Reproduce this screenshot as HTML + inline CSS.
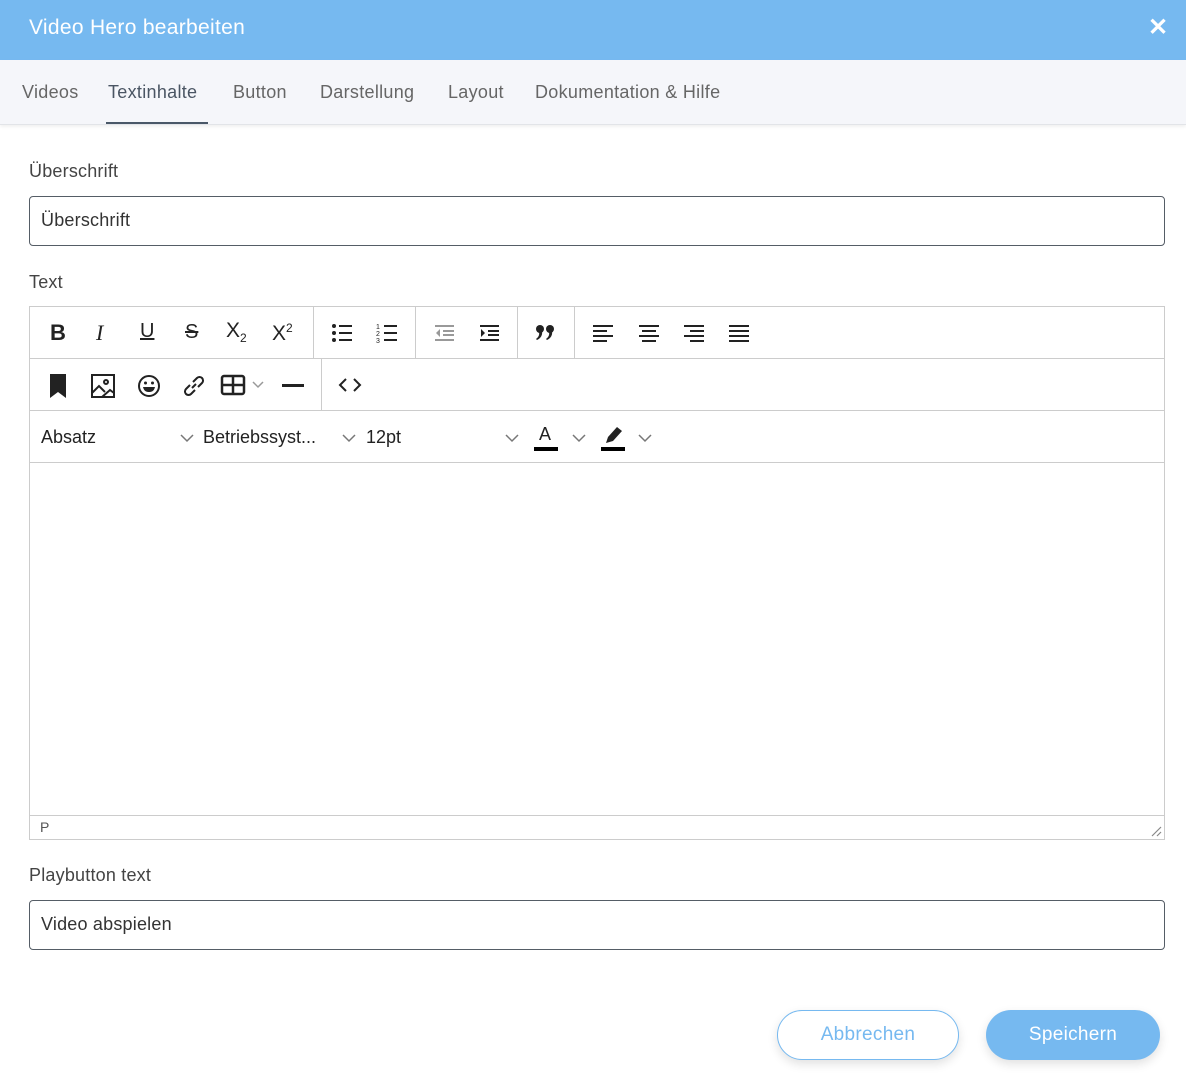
<!DOCTYPE html>
<html><head><meta charset="utf-8"><style>
*{box-sizing:border-box;margin:0;padding:0}
body{width:1186px;height:1086px;background:#fff;font-family:"Liberation Sans",sans-serif;color:#333;position:relative;overflow:hidden}
.a{position:absolute}
.hdr{left:0;top:0;width:1186px;height:60px;background:#76b9f0;color:#fff;font-size:21px;letter-spacing:.3px}
.tabs{left:0;top:60px;width:1186px;height:65px;background:#f5f6fa;border-bottom:1px solid #e2e4e8;box-shadow:0 2px 3px rgba(0,0,0,.06)}
.tab{top:22px;font-size:18px;color:#666;letter-spacing:.3px}
.lbl{font-size:18px;color:#444;letter-spacing:.2px}
.inp{border:1px solid #555d66;border-radius:4px;height:50px;left:29px;width:1136px;font-size:18px;color:#333;padding:13px 11px;letter-spacing:.2px}
.ed{left:29px;top:306px;width:1136px;height:534px;border:1px solid #ccc}
.row{position:absolute;left:0;width:1134px;height:52px;border-bottom:1px solid #ccc}
.sep{position:absolute;top:0;width:1px;height:51px;background:#ccc}
svg{position:absolute}
.btn{top:1010px;height:50px;border-radius:25px;font-size:19px;text-align:center;line-height:50px;box-shadow:0 4px 10px rgba(0,0,0,.12);letter-spacing:.3px}
</style></head><body>
<div class="a hdr"><div class="a" style="left:29px;top:16px">Video Hero bearbeiten</div>
<div class="a" style="left:1148px;top:13px;font-size:24px;font-weight:bold">✕</div></div>
<div class="a tabs">
<div class="a tab" style="left:22px">Videos</div>
<div class="a tab" style="left:108px;color:#4a5563">Textinhalte</div>
<div class="a" style="left:106px;top:62px;width:102px;height:2px;background:#4a5868"></div>
<div class="a tab" style="left:233px">Button</div>
<div class="a tab" style="left:320px">Darstellung</div>
<div class="a tab" style="left:448px">Layout</div>
<div class="a tab" style="left:535px">Dokumentation &amp; Hilfe</div>
</div>
<div class="a lbl" style="left:29px;top:161px">Überschrift</div>
<div class="a inp" style="top:196px">Überschrift</div>
<div class="a lbl" style="left:29px;top:272px">Text</div>
<div class="a ed">
<div class="row" style="top:0">
<div class="a" style="left:20px;top:13px;font-size:22px;font-weight:bold;color:#222">B</div>
<div class="a" style="left:66px;top:13px;font-size:22px;font-style:italic;font-family:'Liberation Serif';color:#222">I</div>
<div class="a" style="left:110px;top:13px;font-size:20px;text-decoration:underline;color:#222">U</div>
<div class="a" style="left:155px;top:14px;font-size:20px;text-decoration:line-through;color:#222">S</div>
<div class="a" style="left:196px;top:12px;font-size:21px;color:#222">X<sub style="font-size:12px">2</sub></div>
<div class="a" style="left:242px;top:14px;font-size:21px;color:#222">X<sup style="font-size:12px">2</sup></div>
<div class="sep" style="left:283px"></div>
<svg style="left:300px;top:14px" width="24" height="24"><g fill="#222"><circle cx="4" cy="5" r="2"/><circle cx="4" cy="12" r="2"/><circle cx="4" cy="19" r="2"/><rect x="9" y="4" width="13" height="2"/><rect x="9" y="11" width="13" height="2"/><rect x="9" y="18" width="13" height="2"/></g></svg>
<svg style="left:345px;top:14px" width="24" height="24"><g fill="#222"><rect x="9" y="4" width="13" height="2"/><rect x="9" y="11" width="13" height="2"/><rect x="9" y="18" width="13" height="2"/><text x="1" y="8" font-size="7">1</text><text x="1" y="15" font-size="7">2</text><text x="1" y="22" font-size="7">3</text></g></svg>
<div class="sep" style="left:385px"></div>
<svg style="left:402px;top:14px" width="24" height="24"><g fill="#999"><rect x="3" y="4" width="19" height="2"/><rect x="11" y="9" width="11" height="2"/><rect x="11" y="13" width="11" height="2"/><rect x="3" y="18" width="19" height="2"/><path d="M8 8l-4 4 4 4z"/></g></svg>
<svg style="left:447px;top:14px" width="24" height="24"><g fill="#222"><rect x="3" y="4" width="19" height="2"/><rect x="11" y="9" width="11" height="2"/><rect x="11" y="13" width="11" height="2"/><rect x="3" y="18" width="19" height="2"/><path d="M4 8l4 4-4 4z"/></g></svg>
<div class="sep" style="left:487px"></div>
<svg style="left:505px;top:17px" width="22" height="18"><g fill="#222"><circle cx="5" cy="5" r="4"/><path d="M7 7q1 6-5 9l-1-1q4-3 3-7z"/><circle cx="15" cy="5" r="4"/><path d="M17 7q1 6-5 9l-1-1q4-3 3-7z"/></g></svg>
<div class="sep" style="left:544px"></div>
<svg style="left:561px;top:14px" width="24" height="24"><g fill="#222"><rect x="2" y="4" width="20" height="2"/><rect x="2" y="9" width="14" height="2"/><rect x="2" y="14" width="20" height="2"/><rect x="2" y="19" width="14" height="2"/></g></svg>
<svg style="left:607px;top:14px" width="24" height="24"><g fill="#222"><rect x="2" y="4" width="20" height="2"/><rect x="5" y="9" width="14" height="2"/><rect x="2" y="14" width="20" height="2"/><rect x="5" y="19" width="14" height="2"/></g></svg>
<svg style="left:652px;top:14px" width="24" height="24"><g fill="#222"><rect x="2" y="4" width="20" height="2"/><rect x="8" y="9" width="14" height="2"/><rect x="2" y="14" width="20" height="2"/><rect x="8" y="19" width="14" height="2"/></g></svg>
<svg style="left:697px;top:14px" width="24" height="24"><g fill="#222"><rect x="2" y="4" width="20" height="2"/><rect x="2" y="9" width="20" height="2"/><rect x="2" y="14" width="20" height="2"/><rect x="2" y="19" width="20" height="2"/></g></svg>
</div>
<div class="row" style="top:52px">
<svg style="left:16px;top:14px" width="24" height="26"><path d="M4 1h16v24l-8-6-8 6z" fill="#222"/></svg>
<svg style="left:60px;top:14px" width="26" height="26"><g fill="none" stroke="#222" stroke-width="2"><rect x="2" y="2" width="22" height="22"/><circle cx="16" cy="9" r="2"/><path d="M2 20l7-7 6 6M12 24l8-7 4 3"/></g></svg>
<svg style="left:106px;top:14px" width="26" height="26"><g fill="none" stroke="#222" stroke-width="2"><circle cx="13" cy="13" r="10"/></g><g fill="#222"><circle cx="9.5" cy="10" r="1.5"/><circle cx="16.5" cy="10" r="1.5"/><path d="M7 14h12c-1 4-3 5-6 5s-5-1-6-5z"/></g></svg>
<svg style="left:151px;top:14px" width="26" height="26"><g fill="none" stroke="#222" stroke-width="2"><path d="M11 15l4-4M9 12l-4 4a3 3 0 0 0 5 5l4-4M17 14l4-4a3 3 0 0 0-5-5l-4 4"/></g></svg>
<svg style="left:190px;top:15px" width="48" height="24"><g fill="none" stroke="#222" stroke-width="2.5"><rect x="2" y="2" width="22" height="18" rx="2"/><path d="M2 11h22M13 2v18"/></g><path d="M33 8l5 5 5-5" fill="none" stroke="#999" stroke-width="1.5"/></svg>
<div class="a" style="left:252px;top:25px;width:22px;height:3px;background:#222"></div>
<div class="sep" style="left:291px"></div>
<svg style="left:308px;top:18px" width="24" height="16"><path d="M8 2L2 8l6 6M16 2l6 6-6 6" fill="none" stroke="#222" stroke-width="2"/></svg>
</div>
<div class="row" style="top:104px">
<div class="a" style="left:11px;top:16px;font-size:18px;color:#222">Absatz</div>
<svg style="left:150px;top:22px" width="14" height="10"><path d="M1 2l6 6 6-6" fill="none" stroke="#777" stroke-width="1.5"/></svg>
<div class="a" style="left:173px;top:16px;font-size:18px;color:#222">Betriebssyst...</div>
<svg style="left:312px;top:22px" width="14" height="10"><path d="M1 2l6 6 6-6" fill="none" stroke="#777" stroke-width="1.5"/></svg>
<div class="a" style="left:336px;top:16px;font-size:18px;color:#222">12pt</div>
<svg style="left:475px;top:22px" width="14" height="10"><path d="M1 2l6 6 6-6" fill="none" stroke="#777" stroke-width="1.5"/></svg>
<div class="a" style="left:509px;top:13px;font-size:18px;color:#222">A</div>
<div class="a" style="left:504px;top:36px;width:24px;height:4px;background:#000"></div>
<svg style="left:542px;top:22px" width="14" height="10"><path d="M1 2l6 6 6-6" fill="none" stroke="#777" stroke-width="1.5"/></svg>
<svg style="left:572px;top:14px" width="24" height="20"><path d="M4 18l2-6 9-10 5 4-9 10z" fill="#222"/></svg>
<div class="a" style="left:571px;top:36px;width:24px;height:4px;background:#000"></div>
<svg style="left:608px;top:22px" width="14" height="10"><path d="M1 2l6 6 6-6" fill="none" stroke="#777" stroke-width="1.5"/></svg>
</div>
<div class="a" style="left:0;top:508px;width:1134px;height:24px;border-top:1px solid #ccc;font-size:14px;color:#555;padding:3px 10px">P</div>
<svg style="left:1120px;top:518px" width="12" height="12"><path d="M11 2L2 11M11 7L7 11" stroke="#888" stroke-width="1.2"/></svg>
</div>
<div class="a lbl" style="left:29px;top:865px">Playbutton text</div>
<div class="a inp" style="top:900px">Video abspielen</div>
<div class="a btn" style="left:777px;width:182px;border:1px solid #76b9f0;color:#76b9f0;background:#fff;line-height:48px">Abbrechen</div>
<div class="a btn" style="left:986px;width:174px;background:#76b9f0;color:#fff">Speichern</div>
</body></html>
